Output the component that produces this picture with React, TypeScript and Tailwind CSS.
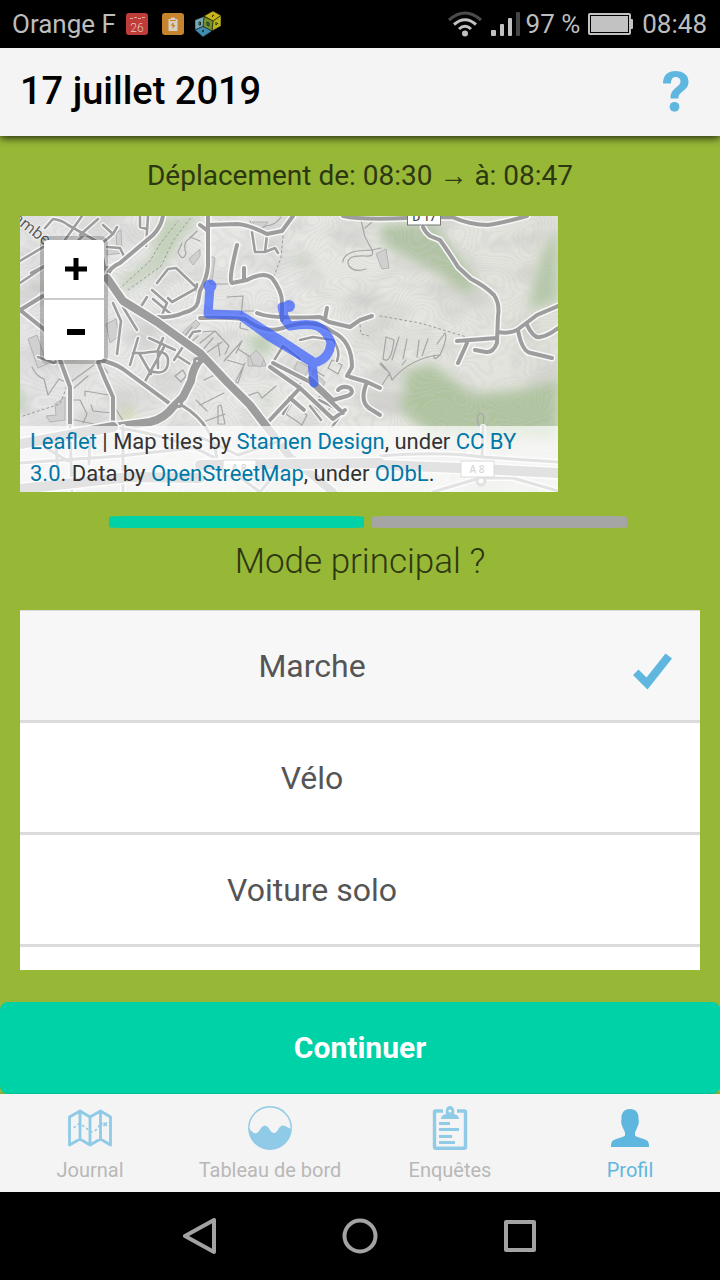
import { useState } from "react";
import type { ReactNode } from "react";

const MAIN_ROADS = [
  "M87 62L103 85L137 106L180 137L207 166L230 189L270 241L313 276",
  "M180 144Q173 151 171 165L163 181L153 191Q144 203 130 206L93 211",
];

const MEDIUM_ROADS = [
  "M143 0Q141 11 133 19L100 47Q84 54 89 66",
  "M188 0L188 50Q187 62 180 75L178 86Q176 94 163 97Q152 102 138 101",
  "M188 9L217 8Q230 9 247 18L262 15L273 0",
  "M0 94L23 80M0 94L25 114L40 144L50 171L50 211",
  "M78 146Q85 164 93 181L93 211",
  "M80 144Q94 147 103 153L153 190",
  "M323 0Q340 4 387 2L432 1Q450 9 468 9Q482 7 507 0",
  "M403 11Q405 16 410 20L420 24Q430 38 438 51L451 63Q465 70 474 79Q480 88 478 100L477 127Q473 137 466 136L455 134",
  "M437 125L477 122M447 127L438 147M478 116Q489 118 497 114L517 99L538 90M507 109Q514 123 520 121Q528 120 538 112M498 114Q502 136 511 137L532 142",
  "M237 97Q250 103 300 101L309 106L330 111L340 104L352 100M305 103L307 92",
  "M180 102Q205 101 225 103Q245 118 263 112Q293 101 313 116Q332 125 332 151L327 160",
  "M217 29Q208 66 212 67L227 64Q244 55 252 62Q262 75 262 86L262 104M224 52L224 64",
  "M250 151L280 172L248 206M253 147L290 166L323 197M290 162L313 184L327 180Q335 177 330 172Q322 169 318 174M330 161L347 166L360 172M347 166Q338 187 352 194L360 199M280 172L313 203L325 194M270 182L284 194",
  "M188 15L180 9",
];

const SMALL_ROADS = [
  "M25 12L33 3Q42 4 48 9L80 27L87 62M42 28L62 0M60 19L78 3M63 20L40 40L0 67M83 9L93 18L97 11M93 18L80 29",
  "M120 0L120 11L127 13M128 0L126 30M87 31L100 32L106 44M85 52L100 48M0 45L25 30M11 57L30 47M22 78L3 96",
  "M137 67L148 53L156 52L177 72L152 86L148 82M177 68L177 82M132 74L147 87L141 101M120 92L127 81M133 83L152 99",
  "M103 91L117 114M93 87L101 105L97 138M143 122L138 134M110 149L118 122M129 122L155 134M144 131L123 169M113 137L124 137Q146 132 148 143Q149 161 130 155M119 137L131 158M138 152L138 137M154 144L173 116L180 115M159 141L173 150",
  "M232 16L235 36L245 36L247 19M245 36L255 32L258 37",
  "M280 124L293 121L313 124Q321 135 317 145M250 151L263 130L280 143M263 198L280 168M290 190L301 204M299 184L323 196L312 211M18 141L34 147L40 142",
];

const LANES = [
  "M190 68L218 68M207 81L223 80L220 112L228 114M223 95L239 95M180 116L195 115M180 127L195 115L209 130L205 138M182 140L202 126M198 127L200 140M204 145L222 125L216 137M218 133L229 140M193 122L180 137",
  "M198 190L201 189L205 208L198 208ZM207 144L224 149L218 167L207 165M216 165L225 147M180 189L204 177M219 183L238 176L242 182L256 170M184 164L199 157",
  "M340 0L345 21Q351 32 352 34L337 35Q323 38 323 46M352 34Q355 41 345 40Q324 39 329 50Q335 57 346 53M345 12L352 6M352 34L361 32",
  "M366 121L374 124Q371 149 363 143ZM379 121L372 144M387 123L383 143M399 124L397 141M408 123L402 140M417 128L425 117Q428 122 420 139Q413 146 414 139M361 147Q370 156 372 164Q391 142 419 139M360 172L370 157M366 154L360 148M386 144L382 149",
  "M12 151Q16 160 24 163L28 179L39 163L52 169M52 165L74 149M53 184L60 184L67 198L63 207M65 180L65 175L89 179M71 189L73 195L92 197M54 172L68 160M50 203L74 208M78 144L88 157M91 185L105 208",
  "M155 160L163 154L166 160L161 166ZM162 123L172 111M167 130L178 120M157 135L177 114M176 184L187 195M183 206L205 198",
  "M162 27L158 36Q163 47 166 37Q162 27 170 22L177 15M170 21L180 25M230 5Q235 17 246 10Q256 9 261 1",
  "M272 187L287 199L282 209L266 198Z M300 180L311 190L306 199L292 190ZM312 144L322 149L318 158L308 152ZM294 154L304 160",
  "M459 211L457 202Q460 193 464 201L463 211",
];

const FADED_ROADS = [
  "M0 273L110 261L180 262M0 228L93 211M180 249L360 247M360 249L440 252L538 257",
];

const FADED_LANES = [
  "M50 211L52 276M103 211L103 276M0 247L100 240L180 231M93 211Q155 220 193 241M163 190Q194 209 197 244L240 276M360 240Q420 235 462 241L538 246M413 276L460 262L493 262L538 275M463 211L462 241M180 221L218 239L260 225M240 276L250 264M70 220L69 248M26 232L48 245M36 230L38 256",
];

const ROUTE = "M190 71L188 98L220 99L260 124L292 145L294 167M294 147Q310 143 311 126Q306 114 297 110Q289 107 270 110L265 104L262 91L269 90M220 99L250 121L293 147";

function RoadSet({ paths, width, casing }: { paths: string[]; width: number; casing: number }) {
  return (
    <>
      {paths.map((d) => (
        <path key={`c${d}`} d={d} stroke="#f8f8f8" strokeWidth={casing} />
      ))}
      {paths.map((d) => (
        <path key={d} d={d} stroke="#9d9d9d" strokeWidth={width} />
      ))}
    </>
  );
}

function MapDrawing() {
  return (
    <svg viewBox="0 0 538 276" preserveAspectRatio="xMinYMin slice" className="block h-full w-full" aria-hidden="true">
      <defs>
        <filter id="contours" x="0" y="0" width="100%" height="100%">
          <feTurbulence type="fractalNoise" baseFrequency="0.016 0.02" numOctaves="2" seed="8" />
          <feColorMatrix values="0 0 0 0 0.6  0 0 0 0 0.6  0 0 0 0 0.6  1 0 0 0 0" />
          <feComponentTransfer>
            <feFuncA
              type="table"
              tableValues="0 0 .6 0 0 .6 0 0 .6 0 0 .6 0 0 .6 0 0 .6 0 0 .6 0 0 .6 0 0 .6 0 0 .6 0 0 .6 0 0 .6 0 0 .6 0 0 .6 0 0 .6 0 0 .6 0 0 .6 0 0 .6 0 0 .6 0 0 .6 0 0 .6 0 0 .6 0 0 .6 0 0"
            />
          </feComponentTransfer>
        </filter>
        <filter id="relief" x="0" y="0" width="100%" height="100%">
          <feTurbulence type="fractalNoise" baseFrequency="0.018 0.03" numOctaves="3" seed="4" />
          <feColorMatrix values="0 0 0 0 0.5  0 0 0 0 0.5  0 0 0 0 0.49  0 1.6 0 0 -0.68" />
        </filter>
        <filter id="soft" x="-30%" y="-30%" width="160%" height="160%">
          <feGaussianBlur stdDeviation="6" />
        </filter>
        <linearGradient id="ground" x1="0" y1="0" x2="1" y2="0">
          <stop offset="0" stopColor="#e6e6e6" />
          <stop offset="0.5" stopColor="#e8e9e5" />
          <stop offset="1" stopColor="#e1e2da" />
        </linearGradient>
      </defs>
      <rect width="538" height="276" fill="url(#ground)" />
      <rect width="538" height="276" filter="url(#relief)" opacity="0.7" />
      <g filter="url(#soft)">
        <path d="M140 0L180 0L165 18L143 50L100 77L98 68L132 42Z" fill="#c3d2b8" />
        <path d="M360 8L415 8L430 30L460 68L445 78L410 52L362 28Z" fill="#b0c3a2" />
        <path d="M538 15L525 30L515 60L508 95L538 85Z" fill="#b4c7a7" />
        <path d="M386 155L412 148L452 178L500 174L538 165L538 225L410 218L380 195Z" fill="#afc49e" />
        <path d="M226 122L248 118L254 134L238 140Z" fill="#b7ccae" />
        <path d="M98 197L114 193L113 203L101 205Z" fill="#c9d89a" />
        <path d="M-6 172L5 182L4 195L-6 195Z" fill="#b7ccae" />
        <path d="M280 38L287 40L284 49L278 48ZM240 178L253 182L245 190Z" fill="#c0cdb6" />
      </g>
      <rect width="538" height="276" filter="url(#contours)" opacity="0.55" />

      <g fill="#d0d0d0" stroke="#b4b4b4" strokeWidth="1">
        <path d="M8 123L17 119L27 148L18 152ZM86 108L96 103L99 120L90 127ZM96 17L101 14L102 37L87 39L87 34L97 33Z" />
        <path d="M190 40L195 42L192 66L186 66ZM232 6L248 6L240 16ZM228 140L244 144L246 150L228 150Z" />
        <path d="M356 38L366 33L369 52L362 53ZM169 43L180 33L180 40L173 49ZM160 119L176 104L180 108L164 125Z" />
        <path d="M230 140L236 134L244 143L241 151L233 149ZM35 188L45 181L45 204L30 206L26 200L36 199Z" />
        <path d="M278 145L290 152L284 161L274 153ZM293 155L305 166L299 178L290 169Z" />
      </g>

      <g fill="none" strokeLinecap="round" strokeLinejoin="round">
        <g stroke="#a6a6a6" strokeWidth="1.2">
          {LANES.map((d) => (
            <path key={d} d={d} />
          ))}
        </g>
        <g stroke="#9b9b9b" strokeWidth="1" strokeDasharray="2 3">
          <path d="M99 73L130 45L140 28L158 5M108 74L141 50L153 25L172 0M263 20L261 42L254 60M360 100L400 107L450 122M340 109L341 118L349 120M3 200L40 188L47 170" />
        </g>
        <RoadSet paths={SMALL_ROADS} width={2.6} casing={5} />
        <RoadSet paths={MEDIUM_ROADS} width={4} casing={7} />
        <RoadSet paths={MAIN_ROADS} width={8} casing={11} />
        <RoadSet paths={FADED_LANES} width={3} casing={6} />
        <RoadSet paths={FADED_ROADS} width={10} casing={13} />
      </g>
      <circle cx="159" cy="188" r="2.5" fill="#f3f3f3" stroke="#9d9d9d" strokeWidth="3" />
      <circle cx="177" cy="145" r="2.5" fill="#f3f3f3" stroke="#9d9d9d" strokeWidth="3" />
      <circle cx="461" cy="265" r="4" fill="#f0f0e8" stroke="#9d9d9d" strokeWidth="3" />

      <rect x="387.500" y="-12" width="33" height="21" fill="#fff" stroke="#777" />
      <text x="404" y="5" textAnchor="middle" fontSize="11" fontWeight="600" fontFamily="Open Sans, sans-serif" fill="#444">
        D 17
      </text>
      <text transform="translate(-8 4) rotate(38)" fontSize="16" fontFamily="Open Sans, sans-serif" fill="#555" stroke="#eee" strokeWidth="2" paintOrder="stroke">
        ambert
      </text>
      {[
        { x: 203, y: 244 },
        { x: 441, y: 245 },
      ].map((s) => (
        <g key={s.x}>
          <rect x={s.x} y={s.y} width="33" height="16" fill="#fff" stroke="#888" />
          <text x={s.x + 16} y={s.y + 12} textAnchor="middle" fontSize="10" fontWeight="600" fontFamily="Open Sans, sans-serif" fill="#777">
            A 8
          </text>
        </g>
      ))}
      <g opacity="0.68" stroke="#3158ff" strokeLinecap="round" strokeLinejoin="round">
        <path d={ROUTE} fill="none" strokeWidth="9" />
        <circle cx="190" cy="70" r="6.500" fill="#3158ff" stroke="none" />
        <circle cx="269" cy="90" r="6" fill="#3158ff" stroke="none" />
      </g>
    </svg>
  );
}

function StatusBar() {
  return (
    <div className="flex h-12 shrink-0 items-center justify-between bg-black px-3 text-[26px] leading-8 text-[#bdbdbd]">
      <div className="flex items-center">
        <span>Orange F</span>
        <svg viewBox="0 0 22 22" className="ml-[10px] size-[22px]" aria-hidden="true">
          <rect width="22" height="22" rx="3" fill="#bf3c38" />
          <path d="M4 5.500H7M8 4.500H11M12 5.500H15M16 4.500H19" stroke="#e0aaa6" strokeWidth="1.200" />
          <text x="11" y="19" textAnchor="middle" fontSize="12" fontWeight="300" fontFamily="Roboto, sans-serif" fill="#e6c8c4">
            26
          </text>
        </svg>
        <svg viewBox="0 0 22 22" className="ml-[14px] size-[22px]" aria-hidden="true">
          <rect width="22" height="22" rx="3" fill="#c6842e" />
          <path d="M9 4.500H13V6H15.500V18H6.500V6H9Z" fill="#d6d0c6" />
          <path d="M8 7.500H14" stroke="#c6842e" />
          <path d="M11.500 9L8.500 12.500H10.500V16L13.500 12H11.500Z" fill="#c6842e" />
        </svg>
        <svg viewBox="0 0 26 26" className="ml-[11px] size-[26px]" aria-hidden="true">
          <g stroke="#111" strokeWidth="0.500" strokeLinejoin="round">
            <path d="M9 5L18 0L26 4.500L18 10Z" fill="#c9b51a" />
            <path d="M18 10L26 4.500V15L17 20Z" fill="#b7b41c" />
            <path d="M9 5.500L18 10L17 20L8 15.500Z" fill="#75922c" />
            <path d="M0 9L9 5.500L8 15.500L0 19Z" fill="#77a9b8" />
            <path d="M0 19L8 15.500L17 20L8 26Z" fill="#3f8cb4" />
          </g>
          <g fill="none" stroke="#1b2a1b" strokeWidth="1">
            <path d="M19 4L17 5L18 6M4 11V14H5.500V11ZM12 11V14L14 15V12ZM21 11V14L23 12M9 19L7 20L9 21" />
          </g>
        </svg>
      </div>
      <div className="flex items-center">
        <svg viewBox="0 0 34 26" className="h-[26px] w-[34px]" fill="none" strokeWidth="3" aria-hidden="true">
          <path d="M1 9Q17 -5 33 9" stroke="#4b4b4b" />
          <path d="M6 13.500Q17 4 28 13.500M11 18Q17 12.500 23 18" stroke="#c2c2c2" />
          <circle cx="17" cy="22.500" r="3" fill="#c2c2c2" />
        </svg>
        <svg viewBox="0 0 29 24" className="ml-[9px] h-6 w-[29px]" fill="#c2c2c2" aria-hidden="true">
          <rect x="0" y="18" width="5" height="6" rx="1" />
          <rect x="9" y="12" width="4" height="12" rx="1" />
          <rect x="17" y="6" width="4" height="18" rx="1" />
          <rect x="25" y="0" width="4" height="24" rx="1" fill="#454545" />
        </svg>
        <span className="ml-[6px]">97 %</span>
        <svg viewBox="0 0 45 22" className="ml-2 h-[22px] w-[45px]" aria-hidden="true">
          <rect x="0" y="0" width="43" height="22" rx="2" fill="#c2c2c2" />
          <rect x="2" y="2" width="39" height="18" fill="#000" />
          <rect x="3" y="3" width="37" height="16" fill="#c2c2c2" />
          <rect x="42" y="6" width="3" height="10" rx="1" fill="#c2c2c2" />
        </svg>
        <span className="mr-px ml-[9px]">08:48</span>
      </div>
    </div>
  );
}

function MapLink({ href, children }: { href: string; children: ReactNode }) {
  return (
    <a href={href} className="text-[#0078a8]">
      {children}
    </a>
  );
}

const MODES = ["Marche", "Vélo", "Voiture solo"];

function ModeList() {
  const [mode, setMode] = useState("Marche");
  return (
    <fieldset aria-labelledby="mode-title" className="mt-[26px] border-t border-[#dddddd] bg-white pb-[23px]">
      {MODES.map((name) => (
        <label
          key={name}
          className="relative flex h-28 cursor-pointer items-center border-b-3 border-[#dcdcdc] pr-7 text-[32px] text-[#555555] has-checked:bg-[#f7f7f7]"
        >
          <input type="radio" name="mode" value={name} checked={mode === name} onChange={() => setMode(name)} className="sr-only" />
          <span className="flex-1 pr-7 text-center">{name}</span>
          <span className="flex w-10 shrink-0 pt-3">
            {mode === name && (
              <svg viewBox="0 0 40 38" className="h-[38px] w-10" aria-hidden="true">
                <path d="M1 22L6.500 16.500L14.500 24.500L33.500 0.500L40 5.500L15.500 36.500Z" fill="#5fb7e0" />
              </svg>
            )}
          </span>
        </label>
      ))}
    </fieldset>
  );
}

function JournalIcon() {
  return (
    <svg viewBox="0 0 46 40" className="h-10 w-[46px]" fill="none" stroke="currentColor" strokeWidth="2.800" strokeLinejoin="round" aria-hidden="true">
      <path d="M2.500 9L13 3L23 9L33.500 3L43.500 9V37L33.500 31L23 37L13 31L2.500 37ZM13 3V31M23 9V37M33.500 3V31" />
      <path d="M7 20Q11 14 15 17T23 23T32 18L36 16" strokeWidth="1.700" strokeDasharray="2.500 2.500" />
      <path d="M36.500 14.500L40 18M40 14.500L36.500 18" strokeWidth="1.600" />
    </svg>
  );
}

function DashboardIcon() {
  return (
    <svg viewBox="0 0 44 44" className="size-11" aria-hidden="true">
      <circle cx="22" cy="22" r="21.200" fill="none" stroke="currentColor" strokeWidth="1.400" />
      <path d="M1 22C4 26 6 28 8.500 27C12 26 12.500 20 17 19.500C21.500 20 22 27 26 27C30 27 30.500 19.500 35 19.500C38 19.500 40 22 43 23A21 21 0 0 1 1 22Z" fill="currentColor" />
    </svg>
  );
}

function SurveyIcon() {
  return (
    <svg viewBox="0 0 36 44" className="h-11 w-9" fill="none" stroke="currentColor" aria-hidden="true">
      <path d="M11 5H3.500Q2.500 5 2.500 6V41Q2.500 42.300 4 42.300H32Q33.500 42.300 33.500 41V6Q33.500 5 32.500 5H25" strokeWidth="3.400" />
      <path d="M9 13Q9 9 14 8Q13 0 18 0Q23 0 22 8Q27 9 27 13Z" fill="currentColor" stroke="none" />
      <circle cx="18" cy="5" r="1.600" fill="#f4f4f4" stroke="none" />
      <path d="M7 17.500H18M7 23.500H27M7 30.500H20M7 36.500H23" strokeWidth="3" />
    </svg>
  );
}

function ProfileIcon() {
  return (
    <svg viewBox="0 0 38 38" className="size-[38px]" fill="currentColor" aria-hidden="true">
      <path d="M19 0C25 0 28 4 27.500 10C28.500 14 27 16 26 19L24 23.500V26.500C26 29 34 29 37 32.500Q38 34 38 38H0Q0 34 1 32.500C4 29 12 29 14 26.500V23.500L12 19C11 16 9.500 14 10.500 10C10 4 13 0 19 0Z" />
    </svg>
  );
}

const TABS = [
  { label: "Journal", icon: <JournalIcon />, active: false },
  { label: "Tableau de bord", icon: <DashboardIcon />, active: false },
  { label: "Enquêtes", icon: <SurveyIcon />, active: false },
  { label: "Profil", icon: <ProfileIcon />, active: true },
];

function TabBar() {
  return (
    <nav className="grid h-[98px] shrink-0 grid-cols-4 bg-[#f4f4f4] shadow-[0_-1px_2px_rgba(0,0,0,0.1)]">
      {TABS.map((tab) => (
        <a key={tab.label} href={`#${tab.label}`} className="flex flex-col items-center pt-3 text-xl leading-6">
          <span className={tab.active ? "flex h-11 items-center text-[#5fb7e0]" : "flex h-11 items-center text-[#8fcae6]"}>{tab.icon}</span>
          <span className={tab.active ? "mt-2 text-[#5fb7e0]" : "mt-2 text-[#b8b8b8]"}>{tab.label}</span>
        </a>
      ))}
    </nav>
  );
}

function SystemNav() {
  return (
    <div className="flex h-[88px] shrink-0 items-center justify-center gap-[124px] bg-black text-[#a3a3a3]">
      <button type="button" aria-label="Retour" className="size-9">
        <svg viewBox="0 0 36 36" className="size-9" fill="none" stroke="currentColor" strokeWidth="4" strokeLinejoin="round">
          <path d="M32 2V34L3 18Z" />
        </svg>
      </button>
      <button type="button" aria-label="Accueil" className="size-9">
        <svg viewBox="0 0 36 36" className="size-9" fill="none" stroke="currentColor" strokeWidth="4">
          <circle cx="18" cy="18" r="15.500" />
        </svg>
      </button>
      <button type="button" aria-label="Applications récentes" className="size-9">
        <svg viewBox="0 0 36 36" className="size-9" fill="none" stroke="currentColor" strokeWidth="4" strokeLinejoin="round">
          <rect x="4" y="4" width="28" height="28" />
        </svg>
      </button>
    </div>
  );
}

export default function App() {
  return (
    <div className="flex min-h-screen flex-col bg-[#97b737] font-[Roboto,sans-serif]">
      <StatusBar />
      <header className="relative flex h-[88px] shrink-0 items-center justify-between bg-[#f4f4f4] pr-[31px] pb-0.5 pl-5 shadow-[0_2px_8px_rgba(0,0,0,0.8)]">
        <h1 className="text-[38px] leading-[44px] font-medium text-black">17 juillet 2019</h1>
        <button type="button" aria-label="Aide" className="h-[41px] w-[26px]">
          <svg viewBox="0 0 26 41" className="h-[41px] w-[26px]" fill="#5fb7e0" aria-hidden="true">
            <path d="M0 12.500C0 4 5 0 12.500 0C20.500 0 25.500 4 25.500 11C25.500 16 22 18.500 19 21C16 23.500 15.500 24.500 15.500 27.500H7.500C7.500 22.500 9 20 12.500 17C15.500 14.500 17.500 13 17.500 10.500C17.500 7.500 15.500 6 12.500 6C9.500 6 8 8.500 8 12.500Z" />
            <circle cx="11.500" cy="35.800" r="4.900" />
          </svg>
        </button>
      </header>

      <main className="flex flex-1 flex-col px-5 text-[#2d3711]">
        <p className="mt-6 text-center text-[28px] leading-8">Déplacement de: 08:30 → à: 08:47</p>

        <section aria-label="Carte" className="relative mt-6 h-[276px] w-[79.1%] overflow-hidden bg-[#e3e3e1]">
          <MapDrawing />
          <div className="absolute top-5 left-5 flex w-17 flex-col overflow-hidden rounded-lg border-4 border-black/20 bg-clip-padding text-black">
            <button type="button" aria-label="Zoom avant" className="flex h-[60px] items-center justify-center border-b-2 border-[#cccccc] bg-white">
              <svg viewBox="0 0 22 22" className="ml-1 size-[22px]" aria-hidden="true">
                <path d="M0 11H22M11 0V22" stroke="currentColor" strokeWidth="5" />
              </svg>
            </button>
            <button type="button" aria-label="Zoom arrière" className="flex h-[60px] items-center justify-center bg-white">
              <svg viewBox="0 0 18 6" className="mt-1 ml-1 h-[6px] w-[18px]" aria-hidden="true">
                <path d="M0 3H18" stroke="currentColor" strokeWidth="6" />
              </svg>
            </button>
          </div>
          <p className="absolute inset-x-0 bottom-0 bg-white/70 px-[10px] pb-0.5 text-[22px] leading-8 text-[#333333]">
            <MapLink href="#leaflet">Leaflet</MapLink> | Map tiles by <MapLink href="#stamen">Stamen Design</MapLink>, under{" "}
            <MapLink href="#cc-by">CC BY 3.0</MapLink>. Data by <MapLink href="#osm">OpenStreetMap</MapLink>, under{" "}
            <MapLink href="#odbl">ODbL</MapLink>.
          </p>
        </section>

        <div className="mt-6 flex justify-center gap-2 pl-4">
          <div className="h-3 w-[255px] rounded-[20px/1px] bg-[#00d2a8]" />
          <div className="h-3 w-[255px] rounded-[20px/1px] bg-[#a5a5a5]" />
        </div>

        <h2 id="mode-title" className="mt-3 text-center text-[35px] leading-[44px] font-light">
          Mode principal ?
        </h2>
        <ModeList />
      </main>

      <button type="button" className="mt-8 flex h-[92px] shrink-0 items-center justify-center rounded-lg bg-[#00d2a8] pb-0.5 text-[30px] font-bold text-white">
        Continuer
      </button>
      <TabBar />
      <SystemNav />
    </div>
  );
}
